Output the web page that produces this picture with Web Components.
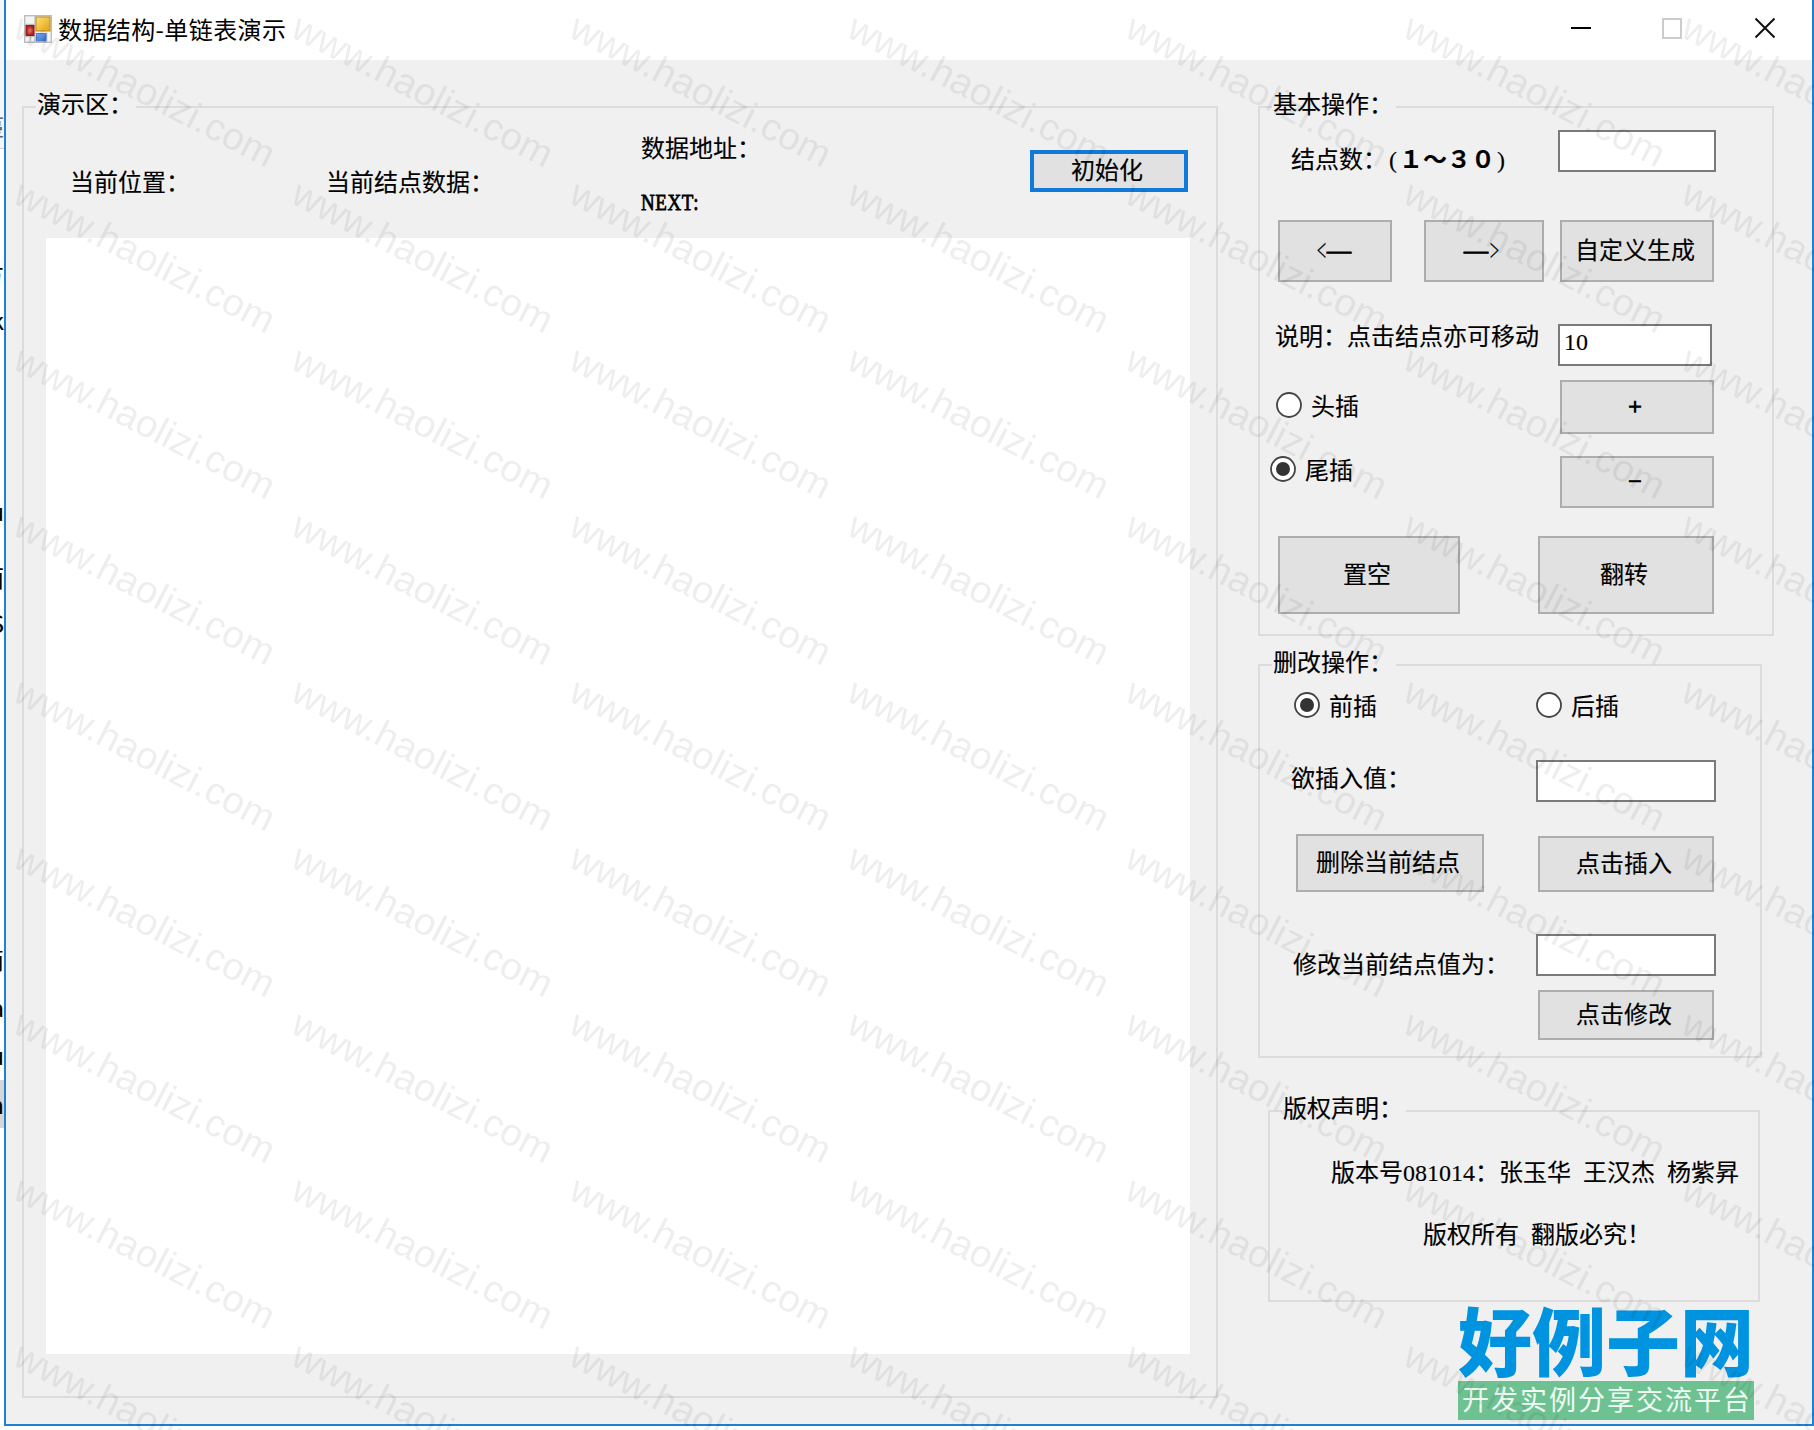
<!DOCTYPE html>
<html lang="zh-CN">
<head>
<meta charset="utf-8">
<title>数据结构-单链表演示</title>
<style>
body {
  margin: 0;
  width: 1814px;
  height: 1430px;
  overflow: hidden;
  position: relative;
  display: flex;
  background: #fff;
  color: #000;
  font: 24px/24px "Liberation Serif", "Noto Sans CJK SC", serif;
  word-spacing: 6px;
  -webkit-text-stroke: .15px #000;
}
.client { display: flex; padding: 46px 0 0 16px; }
.side { display: flex; flex-direction: column; margin-left: 40px; }
.row { display: flex; align-items: flex-start; }
.col { display: flex; flex-direction: column; }
.push { margin-left: auto; }
.head {
  display: grid;
  grid-template-columns: 256px 315px 389px 158px;
  align-items: start;
  height: 121px;
  padding-left: 46px;
}
.canvas { width: 1144px; height: 1116px; margin-left: 22px; background: #fff; }
.next { display: inline-block; transform: scaleX(.79); transform-origin: 0 0; letter-spacing: .8px; -webkit-text-stroke: .8px #000; }
.wide { font-weight: bold; }
.paren { display: inline-block; width: 12px; text-align: center; }
.lt { display: inline-block; width: 12px; text-align: center; transform: scale(.7, 1.3); }
.dash { position: relative; top: -1px; -webkit-text-stroke: 1px #000; }
</style>
</head>
<body>
<edge-strip></edge-strip>
<app-window caption="数据结构-单链表演示">
  <div class="client">
    <group-box legend="演示区：" style="width:1196px;height:1292px;--gap:100px">
      <div class="head">
        <text-label style="margin-top:54px">当前位置：</text-label>
        <text-label style="margin-top:54px">当前结点数据：</text-label>
        <div class="col" style="padding-top:20px;gap:29px">
          <text-label>数据地址：</text-label>
          <text-label><span class="next">NEXT:</span></text-label>
        </div>
        <tool-button active style="margin-top:33px;height:42px">初始化</tool-button>
      </div>
      <div class="canvas"></div>
    </group-box>

    <div class="side">
      <group-box legend="基本操作：" style="width:516px;height:530px;--gap:124px">
        <div class="row" style="margin:13px 56px 0 31px">
          <text-label style="margin-top:18px">结点数：<span class="paren">(</span><span class="wide">１～３０</span><span class="paren">)</span></text-label>
          <text-field class="push" style="width:158px"></text-field>
        </div>
        <div class="row" style="margin:48px 0 0 18px">
          <tool-button style="width:114px;height:62px"><span class="lt">&lt;</span><span class="dash">—</span></tool-button>
          <tool-button style="width:120px;height:62px;margin:0 16px 0 32px"><span class="dash">—</span><span class="lt">&gt;</span></tool-button>
          <tool-button style="width:154px;height:62px">自定义生成</tool-button>
        </div>
        <div class="row" style="margin:42px 60px 0 15px">
          <text-label style="margin-top:1px">说明：点击结点亦可移动</text-label>
          <text-field class="push" style="width:154px">10</text-field>
        </div>
        <div class="row" style="margin:14px 58px 0 10px">
          <div class="col" style="padding-top:12px;gap:38px">
            <radio-option style="margin-left:6px">头插</radio-option>
            <radio-option checked>尾插</radio-option>
          </div>
          <div class="col push" style="gap:22px">
            <tool-button style="width:154px;height:54px"><span class="dash">+</span></tool-button>
            <tool-button style="width:154px;height:52px"><span class="dash">−</span></tool-button>
          </div>
        </div>
        <div class="row" style="margin:28px 58px 0 18px">
          <tool-button style="width:182px;height:78px">置空</tool-button>
          <tool-button class="push" style="width:176px;height:78px">翻转</tool-button>
        </div>
      </group-box>

      <group-box legend="删改操作：" style="width:504px;height:394px;margin-top:28px;--gap:124px">
        <div class="row" style="margin:17px 0 0 34px">
          <radio-option checked style="width:242px">前插</radio-option>
          <radio-option>后插</radio-option>
        </div>
        <div class="row" style="margin:42px 44px 0 31px">
          <text-label style="margin-top:7px">欲插入值：</text-label>
          <text-field class="push" style="width:180px"></text-field>
        </div>
        <div class="row" style="margin:32px 46px 0 36px;align-items:flex-end">
          <tool-button style="width:188px;height:58px">删除当前结点</tool-button>
          <tool-button class="push" style="width:176px;height:56px">点击插入</tool-button>
        </div>
        <div class="row" style="height:42px;margin:42px 44px 0 33px">
          <text-label style="margin-top:19px">修改当前结点值为：</text-label>
          <text-field class="push" style="width:180px"></text-field>
        </div>
        <div class="row" style="margin:14px 46px 0 0">
          <tool-button class="push" style="width:176px;height:50px">点击修改</tool-button>
        </div>
      </group-box>

      <group-box legend="版权声明：" style="width:492px;height:192px;margin:52px 0 0 10px;--gap:124px">
        <text-label style="margin:40px 0 0 61px">版本号081014：张玉华 王汉杰 杨紫昇</text-label>
        <text-label style="margin:38px 0 0 153px">版权所有 翻版必究！</text-label>
      </group-box>

      <site-logo style="margin:2px 0 0 200px"></site-logo>
    </div>
  </div>
</app-window>
<water-mark></water-mark>

<script>
class BaseElement extends HTMLElement {
  constructor() {
    super();
    this.attachShadow({ mode: 'open' });
    this.shadowRoot.innerHTML = this.render();
  }
}

class AppWindow extends BaseElement {
  render() {
    return `
<style>
:host {
  display: block;
  box-sizing: border-box;
  width: 1810px;
  height: 1426px;
  border: 2px solid #1f80d4;
  border-top: 0;
  background: #f0f0f0;
}
.bar {
  display: flex;
  align-items: flex-start;
  height: 60px;
  background: #fff;
}
.icon { margin: 15px 0 0 18px; }
.title {
  margin: 17px auto 0 6px;
  font-family: "Noto Sans CJK SC", sans-serif;
  letter-spacing: .4px;
  -webkit-text-stroke: 0;
}
.ctl { margin-top: 17px; }
</style>
<div class="bar">
  <svg class="icon" width="28" height="28" viewBox="0 0 28 28">
    <defs>
      <linearGradient id="y" x2="1" y2="1"><stop offset="0" stop-color="#ffe27a"/><stop offset="1" stop-color="#e0a010"/></linearGradient>
      <linearGradient id="b" x2="1" y2="1"><stop offset="0" stop-color="#86b4f4"/><stop offset="1" stop-color="#2b66d0"/></linearGradient>
      <radialGradient id="r"><stop offset="0" stop-color="#e88078"/><stop offset="1" stop-color="#b01c18"/></radialGradient>
    </defs>
    <rect x=".7" y=".7" width="26.6" height="26.6" fill="#f4f4f4" stroke="#bdbdbd" stroke-width="1.4"/>
    <path d="M1 9.5h10M11 1v26M1 21.5h10M6.5 21v6M22.5 19v8" stroke="#c4c4c4" stroke-width="1.4" fill="none"/>
    <rect x="12" y="2" width="14" height="14" fill="url(#y)" stroke="#c08a18"/>
    <rect x="2" y="10.5" width="8" height="10" fill="url(#r)" stroke="#a01814"/>
    <rect x="12.5" y="18.5" width="9.5" height="7.5" fill="url(#b)" stroke="#4a7fd8"/>
  </svg>
  <div class="title">${this.getAttribute('caption')}</div>
  <svg class="ctl" width="22" height="22" style="margin-right:69px"><path d="M1 11h20" stroke="#000" stroke-width="2"/></svg>
  <svg class="ctl" width="22" height="22" style="margin-right:71px"><rect x="2" y="2" width="18" height="19" fill="none" stroke="#ccc" stroke-width="2"/></svg>
  <svg class="ctl" width="22" height="22" style="margin-right:36px"><path d="M1.5 1.5l19 19M20.5 1.5l-19 19" stroke="#111" stroke-width="2"/></svg>
</div>
<slot></slot>`;
  }
}

class GroupBox extends BaseElement {
  render() {
    return `
<style>
:host {
  display: block;
  box-sizing: border-box;
  border: 2px solid #dcdcdc;
}
.legend {
  box-sizing: border-box;
  width: var(--gap);
  height: 24px;
  margin: -15px 0 0 12px;
  padding-left: 1px;
  background: #f0f0f0;
  white-space: nowrap;
}
</style>
<div class="legend">${this.getAttribute('legend')}</div>
<slot></slot>`;
  }
}

class TextLabel extends BaseElement {
  render() {
    return `
<style>
:host { display: block; height: 24px; white-space: nowrap; }
</style>
<slot></slot>`;
  }
}

class ToolButton extends BaseElement {
  render() {
    return `
<style>
:host {
  display: flex;
  align-items: center;
  justify-content: center;
  box-sizing: border-box;
  padding-right: 4px;
  border: 2px solid #adadad;
  background: #e1e1e1;
  white-space: nowrap;
}
:host([active]) { border: 4px solid #0f7ad8; }
</style>
<slot></slot>`;
  }
}

class TextField extends BaseElement {
  render() {
    return `
<style>
:host {
  display: block;
  box-sizing: border-box;
  height: 42px;
  padding: 4px 4px 0;
  border: 2px solid #7a7a7a;
  background: #fff;
}
</style>
<slot></slot>`;
  }
}

class RadioOption extends BaseElement {
  render() {
    const dot = this.hasAttribute('checked') ? '<circle cx="13" cy="13" r="7" fill="#333"/>' : '';
    return `
<style>
:host { display: flex; height: 26px; }
.text { margin: 3px 0 0 9px; }
</style>
<svg width="26" height="26"><circle cx="13" cy="13" r="12" fill="#fff" stroke="#444" stroke-width="1.8"/>${dot}</svg>
<div class="text"><slot></slot></div>`;
  }
}

class SiteLogo extends BaseElement {
  render() {
    return `
<style>
:host {
  display: block;
  width: 296px;
  font-family: "Noto Sans CJK SC", sans-serif;
  white-space: nowrap;
  -webkit-text-stroke: 0;
}
.name {
  height: 77px;
  font-size: 74px;
  line-height: 67px;
  font-weight: 900;
  color: #0093e0;
}
.slogan {
  height: 39px;
  padding-left: 4px;
  font-size: 27px;
  line-height: 36px;
  letter-spacing: 2px;
  color: #eefaf2;
  background: #6ec292;
}
</style>
<div class="name">好例子网</div>
<div class="slogan">开发实例分享交流平台</div>`;
  }
}

// pieces of the window behind, visible left of the border
class EdgeStrip extends BaseElement {
  render() {
    const bits = [[113, '蔓', '#666'], [262, '方'], [308, 'k'], [499, 'u'], [565, '面'], [611, 'S'], [947, '简'], [995, 'a'], [1043, 'u'], [1092, 'n']];
    let y = 0;
    const rows = bits.map(([top, ch, color = '#000']) => {
      const gap = top - y;
      y = top + 24;
      return `<div class="bit" style="margin-top:${gap}px;color:${color}">${ch}</div>`;
    }).join('');
    return `
<style>
:host {
  display: block;
  width: 4px;
  height: 1430px;
  overflow: hidden;
  font-family: "Noto Sans CJK SC", sans-serif;
  background:
    linear-gradient(#d6d6d6, #d6d6d6) 0 1080px / 4px 48px no-repeat,
    linear-gradient(#f5f6f7 148px, #d0d0d0 148px, #d0d0d0 149px, #fff 149px);
}
.bit { display: flex; justify-content: flex-end; height: 24px; }
.bit:first-child { font-size: 22px; }
</style>
<div style="overflow:hidden">${rows}</div>`;
  }
}

class WaterMark extends BaseElement {
  render() {
    let marks = '';
    for (let r = 0; r < 9; r++) {
      for (let c = 0; c < 7; c++) {
        marks += `<text transform="translate(${11 + c * 278} ${36 + r * 166}) rotate(27.3)" textLength="288" lengthAdjust="spacingAndGlyphs">www.haolizi.com</text>`;
      }
    }
    return `
<style>
:host { position: absolute; inset: 0; pointer-events: none; -webkit-text-stroke: 0; }
svg { display: block; }
text { font: 38px "Liberation Sans", sans-serif; word-spacing: 0; fill: #000; }
</style>
<svg width="1814" height="1430"><g opacity=".07">${marks}</g></svg>`;
  }
}

customElements.define('app-window', AppWindow);
customElements.define('group-box', GroupBox);
customElements.define('text-label', TextLabel);
customElements.define('tool-button', ToolButton);
customElements.define('text-field', TextField);
customElements.define('radio-option', RadioOption);
customElements.define('site-logo', SiteLogo);
customElements.define('edge-strip', EdgeStrip);
customElements.define('water-mark', WaterMark);
</script>
</body>
</html>
